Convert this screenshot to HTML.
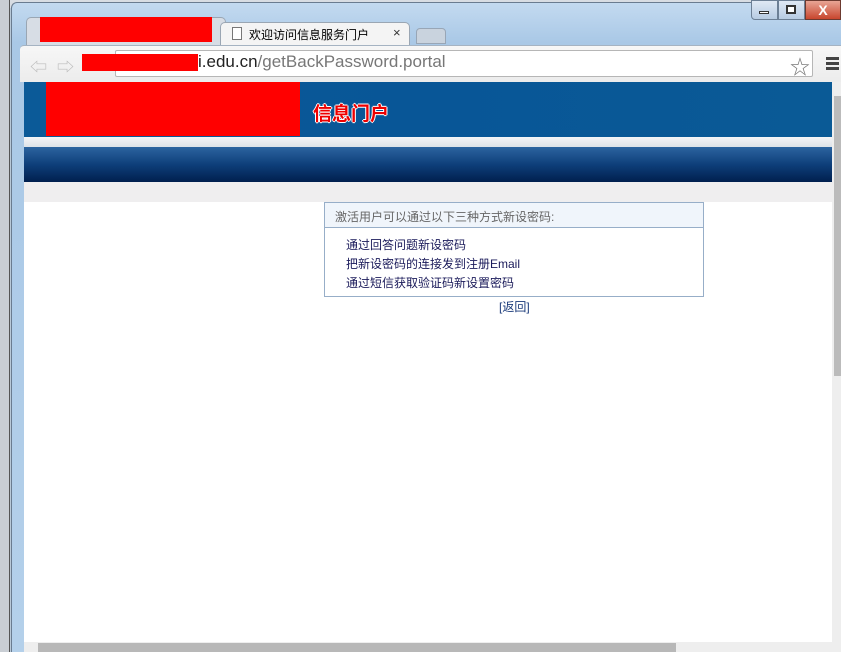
<!DOCTYPE html>
<html><head><meta charset="utf-8"><style>
*{margin:0;padding:0;box-sizing:border-box}
body{width:841px;height:652px;overflow:hidden;position:relative;background:#b9c9d8;font-family:"Liberation Sans","Noto Sans CJK SC",sans-serif}
.a{position:absolute}
</style></head><body>
<div class="a" style="left:0;top:0;width:841px;height:8px;background:#d8dde3"></div>
<div class="a" style="left:0;top:0;width:10px;height:652px;background:#c9ced4;border-right:1px solid #555"></div>
<div class="a" style="left:11px;top:2px;width:830px;height:650px;background:linear-gradient(#c3daf0,#a9c8e6 40px,#b4d0ea);border-radius:6px 0 0 0;border-top:1px solid #6a7c90;border-left:1px solid #6a7c90"></div>
<div class="a" style="left:751px;top:0;width:27px;height:20px;background:linear-gradient(#dfe9f5,#b7cbe2);border:1px solid #6c7f95;border-radius:0 0 0 4px"></div>
<div class="a" style="left:759px;top:11px;width:10px;height:3px;border:1px solid #333;background:#fff"></div>
<div class="a" style="left:778px;top:0;width:27px;height:20px;background:linear-gradient(#dfe9f5,#b7cbe2);border:1px solid #6c7f95"></div>
<div class="a" style="left:786px;top:5px;width:10px;height:9px;border:2px solid #333;background:#fff"></div>
<div class="a" style="left:805px;top:0;width:36px;height:20px;background:linear-gradient(#e8a595,#c8462e);border:1px solid #6c3a30;color:#fff;font-weight:bold;font-size:14px;text-align:center;line-height:18px">X</div>
<div class="a" style="left:26px;top:17px;width:200px;height:28px;background:#d7dde5;border:1px solid #9aa6b3;border-bottom:none;border-radius:5px 5px 0 0"></div>
<div class="a" style="left:40px;top:17px;width:172px;height:25px;background:#f00"></div>
<div class="a" style="left:220px;top:22px;width:190px;height:24px;background:#f4f4f4;border:1px solid #9aa6b3;border-bottom:none;border-radius:5px 5px 0 0"></div>
<div class="a" style="left:232px;top:27px;width:10px;height:13px;border:1px solid #777;background:#fff"></div>
<div class="a" style="left:249px;top:26px;font-size:12px;color:#000">欢迎访问信息服务门户</div>
<div class="a" style="left:393px;top:25px;font-size:13px;color:#333">×</div>
<div class="a" style="left:416px;top:28px;width:30px;height:16px;background:#c9d3de;border:1px solid #98a6b6;border-radius:4px 4px 0 0"></div>
<div class="a" style="left:20px;top:45px;width:821px;height:37px;background:linear-gradient(#f7f7f7,#ececec);border-top:1px solid #a5b3c2;border-radius:4px 0 0 0"></div>
<div class="a" style="left:30px;top:53px;font-size:17px;color:#bbb">⇦</div>
<div class="a" style="left:57px;top:53px;font-size:17px;color:#bbb">⇨</div>
<div class="a" style="left:115px;top:50px;width:698px;height:27px;background:#fff;border:1px solid #b6b6b6;border-radius:2px"></div>
<div class="a" style="left:82px;top:54px;width:116px;height:17px;background:#f00"></div>
<div class="a" style="left:198px;top:52px;font-size:17px;color:#222">i.edu.cn<span style="color:#777">/getBackPassword.portal</span></div>
<div class="a" style="left:790px;top:51px;font-size:20px;color:#777">☆</div>
<div class="a" style="left:826px;top:57px;width:13px;height:3px;background:#444;box-shadow:0 5px 0 #444,0 10px 0 #444"></div>
<div class="a" style="left:24px;top:82px;width:808px;height:560px;background:#fff"></div>
<div class="a" style="left:24px;top:82px;width:808px;height:55px;background:linear-gradient(90deg,#0b5a98,#085697 50%,#0a5a96)"></div>
<div class="a" style="left:46px;top:82px;width:254px;height:54px;background:#f00"></div>
<div class="a" style="left:313px;top:99px;font-size:19px;color:#e00;font-weight:bold;text-shadow:1px 0 0 #fff,-1px 0 0 #fff,0 1px 0 #fff,0 -1px 0 #fff">信息门户</div>
<div class="a" style="left:24px;top:137px;width:808px;height:10px;background:linear-gradient(#f4f5f7,#dde2e8)"></div>
<div class="a" style="left:24px;top:147px;width:808px;height:35px;background:linear-gradient(#2c64a0,#0e3f7a 50%,#001f4e)"></div>
<div class="a" style="left:24px;top:182px;width:808px;height:20px;background:#efeeef"></div>
<div class="a" style="left:324px;top:202px;width:380px;height:95px;border:1px solid #97aec8;background:#fff"></div>
<div class="a" style="left:325px;top:203px;width:378px;height:25px;background:#f0f5fb;border-bottom:1px solid #97aec8"></div>
<div class="a" style="left:335px;top:208px;font-size:12px;color:#666">激活用户可以通过以下三种方式新设密码:</div>
<div class="a" style="left:346px;top:236px;font-size:12px;line-height:19px;color:#1a1a5a">通过回答问题新设密码<br>把新设密码的连接发到注册Email<br>通过短信获取验证码新设置密码</div>
<div class="a" style="left:499px;top:298px;font-size:12px;color:#1a3a7a">[返回]</div>
<div class="a" style="left:832px;top:82px;width:9px;height:560px;background:#eee"></div>
<div class="a" style="left:834px;top:96px;width:7px;height:280px;background:#bbb"></div>
<div class="a" style="left:24px;top:642px;width:817px;height:10px;background:#eee"></div>
<div class="a" style="left:38px;top:643px;width:638px;height:9px;background:#b8b8b8"></div>
</body></html>
